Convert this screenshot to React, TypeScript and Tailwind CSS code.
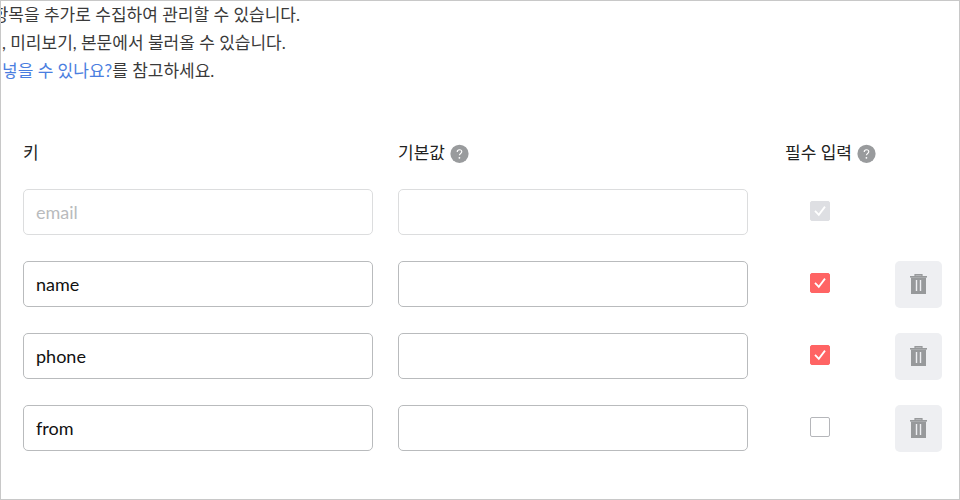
import { useState } from "react";

type Field = {
  id: number;
  key: string;
  value: string;
  required: boolean;
  locked?: boolean;
};

const initialFields: Field[] = [
  { id: 1, key: "email", value: "", required: true, locked: true },
  { id: 2, key: "name", value: "", required: true },
  { id: 3, key: "phone", value: "", required: true },
  { id: 4, key: "from", value: "", required: false },
];

function HelpButton({ label }: { label: string }) {
  return (
    <button
      type="button"
      aria-label={label}
      className="flex shrink-0 items-center justify-center rounded-full text-[#999b9d]"
    >
      <svg viewBox="0 0 19 19" className="h-[19px] w-[19px]" fill="none">
        <circle cx="9.5" cy="9.8" r="9.1" fill="currentColor" />
        <path
          d="M7.2 7.9c0-1.4 1-2.2 2.3-2.2s2.3.8 2.3 2c0 1.7-2.4 1.8-2.4 3.6"
          stroke="#fff"
          strokeWidth="1.1"
        />
        <circle cx="9.4" cy="13.8" r="0.9" fill="#fff" />
      </svg>
    </button>
  );
}

function TrashIcon() {
  return (
    <svg viewBox="0 0 17 20" className="h-5 w-[17px]" fill="none">
      <path d="M5 3V.6h7V3" fill="#bcbec0" stroke="#97999b" strokeWidth="1.2" />
      <path d="M0 2h17v1.6H0z" fill="#97999b" />
      <path d="M1 3.5h15V20H1z" fill="#97999b" />
      <path d="M6.5 6v11M10.5 6v11" stroke="#eeeff2" strokeWidth="1.4" />
    </svg>
  );
}

function RequiredCheck({
  field,
  onChange,
}: {
  field: Field;
  onChange: (required: boolean) => void;
}) {
  return (
    <label className="grid h-5 w-5">
      <input
        type="checkbox"
        aria-label={`${field.key} 필수 입력`}
        checked={field.required}
        disabled={field.locked}
        onChange={(e) => onChange(e.target.checked)}
        className="peer col-start-1 row-start-1 h-5 w-5 appearance-none rounded-xs border border-[#b5b6ba] bg-white checked:border-[#ff6464] checked:bg-[#ff6464] disabled:border-[#dedfe3] disabled:bg-[#dedfe3]"
      />
      <svg
        viewBox="0 0 20 20"
        fill="none"
        className="pointer-events-none invisible col-start-1 row-start-1 h-5 w-5 peer-checked:visible"
      >
        <path d="M5 9.8l3.8 4L15 5.6" stroke="#fff" strokeWidth="1.8" />
      </svg>
    </label>
  );
}

const inputClass =
  "block h-[46px] w-full rounded-[5px] border border-[#b9bbbd] bg-white px-3 text-lg text-[#111] outline-none focus:border-[#777] disabled:border-[#dcddde] disabled:text-[#b9bbbd]";

export default function App() {
  const [fields, setFields] = useState(initialFields);

  const update = (id: number, patch: Partial<Field>) =>
    setFields((prev) => prev.map((f) => (f.id === id ? { ...f, ...patch } : f)));
  const remove = (id: number) =>
    setFields((prev) => prev.filter((f) => f.id !== id));

  return (
    <main className="min-h-screen overflow-hidden border border-[#c8c8c8] bg-white font-[Lato,'Noto_Sans_CJK_KR',sans-serif] text-[#222]">
      <div className="text-[17px] leading-7 whitespace-nowrap text-[#3a3a3a]">
        <p className="flex w-[299px] justify-end overflow-hidden">
          항목을 추가로 수집하여 관리할 수 있습니다.
        </p>
        <p className="pl-px">, 미리보기, 본문에서 불러올 수 있습니다.</p>
        <p className="pl-px">
          <a href="#help" className="text-[#4a7ee0]">
            넣을 수 있나요?
          </a>
          를 참고하세요.
        </p>
      </div>

      <div className="pt-[54px] pr-[17px] pl-[22px]">
        <table className="w-full table-fixed border-collapse text-left">
          <thead>
            <tr className="h-[50px] align-top text-[17px] leading-7">
              <th className="font-normal">키</th>
              <th className="font-normal">
                <div className="flex items-center gap-[5px]">
                  기본값
                  <HelpButton label="기본값 도움말" />
                </div>
              </th>
              <th className="w-[122px] pl-3 font-normal">
                <div className="flex items-center gap-[5px] whitespace-nowrap">
                  필수 입력
                  <HelpButton label="필수 입력 도움말" />
                </div>
              </th>
              <th className="w-[47px]" aria-label="삭제" />
            </tr>
          </thead>
          <tbody>
            {fields.map((field) => (
              <tr key={field.id} className="h-[72px] align-top">
                <td className="pr-[25px]">
                  <input
                    type="text"
                    aria-label="키"
                    value={field.key}
                    disabled={field.locked}
                    onChange={(e) => update(field.id, { key: e.target.value })}
                    className={inputClass}
                  />
                </td>
                <td className="pr-[25px]">
                  <input
                    type="text"
                    aria-label={`${field.key} 기본값`}
                    value={field.value}
                    disabled={field.locked}
                    onChange={(e) => update(field.id, { value: e.target.value })}
                    className={inputClass}
                  />
                </td>
                <td className="pt-3 pl-[37px]">
                  <RequiredCheck
                    field={field}
                    onChange={(required) => update(field.id, { required })}
                  />
                </td>
                <td>
                  {!field.locked && (
                    <button
                      type="button"
                      aria-label={`${field.key} 삭제`}
                      onClick={() => remove(field.id)}
                      className="flex h-[47px] w-[47px] items-center justify-center rounded-[5px] bg-[#eeeff2] pb-0.5 hover:bg-[#e4e5e9]"
                    >
                      <TrashIcon />
                    </button>
                  )}
                </td>
              </tr>
            ))}
          </tbody>
        </table>
      </div>
    </main>
  );
}
